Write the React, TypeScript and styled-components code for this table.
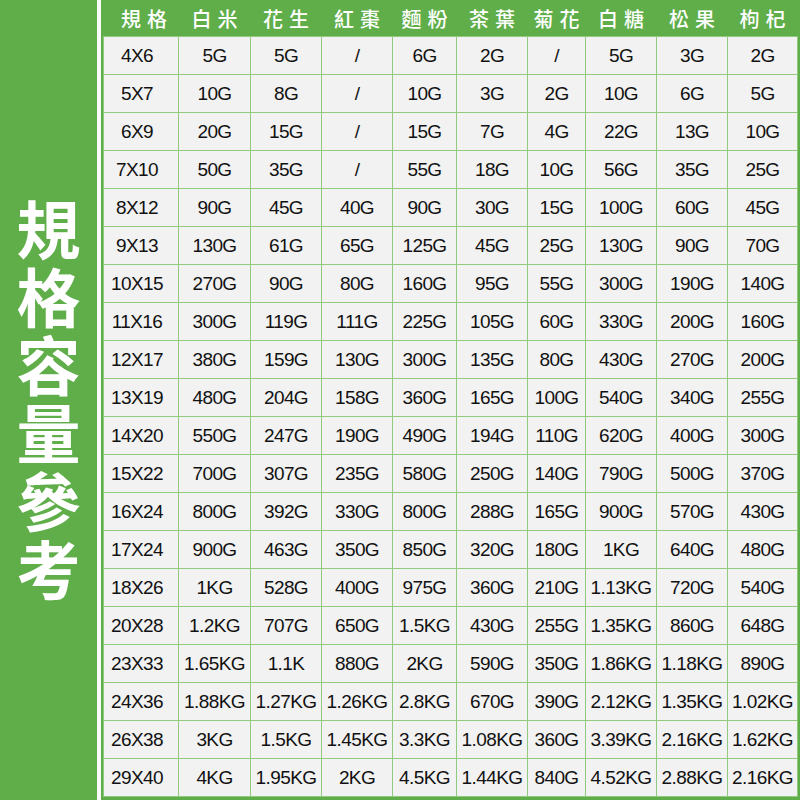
import styled, { createGlobalStyle } from "styled-components";

const GlobalStyle = createGlobalStyle`
  html, body {
    margin: 0;
    padding: 0;
    background: #ffffff;
  }
  body {
    font-family: "Liberation Sans", Arial, sans-serif;
  }
`;

const COLUMNS = "74px 71px 70px 70px 63px 70px 57px 70px 70px 69px";

const headers = ["規格", "白米", "花生", "紅棗", "麵粉", "茶葉", "菊花", "白糖", "松果", "枸杞"];

const rows: string[][] = [
  ["4X6", "5G", "5G", "/", "6G", "2G", "/", "5G", "3G", "2G"],
  ["5X7", "10G", "8G", "/", "10G", "3G", "2G", "10G", "6G", "5G"],
  ["6X9", "20G", "15G", "/", "15G", "7G", "4G", "22G", "13G", "10G"],
  ["7X10", "50G", "35G", "/", "55G", "18G", "10G", "56G", "35G", "25G"],
  ["8X12", "90G", "45G", "40G", "90G", "30G", "15G", "100G", "60G", "45G"],
  ["9X13", "130G", "61G", "65G", "125G", "45G", "25G", "130G", "90G", "70G"],
  ["10X15", "270G", "90G", "80G", "160G", "95G", "55G", "300G", "190G", "140G"],
  ["11X16", "300G", "119G", "111G", "225G", "105G", "60G", "330G", "200G", "160G"],
  ["12X17", "380G", "159G", "130G", "300G", "135G", "80G", "430G", "270G", "200G"],
  ["13X19", "480G", "204G", "158G", "360G", "165G", "100G", "540G", "340G", "255G"],
  ["14X20", "550G", "247G", "190G", "490G", "194G", "110G", "620G", "400G", "300G"],
  ["15X22", "700G", "307G", "235G", "580G", "250G", "140G", "790G", "500G", "370G"],
  ["16X24", "800G", "392G", "330G", "800G", "288G", "165G", "900G", "570G", "430G"],
  ["17X24", "900G", "463G", "350G", "850G", "320G", "180G", "1KG", "640G", "480G"],
  ["18X26", "1KG", "528G", "400G", "975G", "360G", "210G", "1.13KG", "720G", "540G"],
  ["20X28", "1.2KG", "707G", "650G", "1.5KG", "430G", "255G", "1.35KG", "860G", "648G"],
  ["23X33", "1.65KG", "1.1K", "880G", "2KG", "590G", "350G", "1.86KG", "1.18KG", "890G"],
  ["24X36", "1.88KG", "1.27KG", "1.26KG", "2.8KG", "670G", "390G", "2.12KG", "1.35KG", "1.02KG"],
  ["26X38", "3KG", "1.5KG", "1.45KG", "3.3KG", "1.08KG", "360G", "3.39KG", "2.16KG", "1.62KG"],
  ["29X40", "4KG", "1.95KG", "2KG", "4.5KG", "1.44KG", "840G", "4.52KG", "2.88KG", "2.16KG"],
];

const Page = styled.div`
  width: 800px;
  height: 800px;
  display: flex;
  background: #fafafa;
  overflow: hidden;
`;

const SidePanel = styled.div`
  width: 97px;
  height: 100%;
  background: #5fae4a;
  display: flex;
  align-items: center;
  justify-content: center;
  margin-right: 4px;
`;

const SideTitle = styled.div`
  writing-mode: vertical-rl;
  font-family: "Noto Sans CJK TC", "Noto Sans CJK SC", sans-serif;
  font-weight: 700;
  font-size: 64px;
  line-height: 64px;
  letter-spacing: 4px;
  color: #ffffff;
  padding-top: 4px;
`;

const TableArea = styled.div`
  flex: 1;
  background: #5fae4a;
  padding: 0 2px 3px 2px;
  display: flex;
  flex-direction: column;
`;

const HeaderRow = styled.div`
  display: grid;
  grid-template-columns: ${COLUMNS};
  column-gap: 1px;
  padding: 0 1px;
  height: 36px;
`;

const HeaderCell = styled.div<{ $first?: boolean }>`
  display: flex;
  align-items: center;
  justify-content: center;
  font-family: "Noto Sans CJK TC", "Noto Sans CJK SC", sans-serif;
  font-weight: 500;
  font-size: 20px;
  letter-spacing: 6px;
  padding-left: ${(p) => (p.$first ? "12px" : "6px")};
  padding-top: 1px;
  color: #ffffff;
  white-space: nowrap;
`;

const Body = styled.div`
  display: grid;
  grid-template-columns: ${COLUMNS};
  grid-auto-rows: 37px;
  gap: 1px;
  background: #8fca7e;
  border: 1px solid #8fca7e;
`;

const Cell = styled.div<{ $spec?: boolean }>`
  display: flex;
  align-items: center;
  justify-content: center;
  background: #f2f2f2;
  font-family: "Liberation Sans", Arial, sans-serif;
  font-size: 19px;
  letter-spacing: -0.6px;
  color: #111111;
  white-space: nowrap;
  padding-right: ${(p) => (p.$spec ? "8px" : "0")};
`;

export default function App() {
  return (
    <>
      <GlobalStyle />
      <Page>
        <SidePanel>
          <SideTitle>規格容量參考</SideTitle>
        </SidePanel>
        <TableArea>
          <HeaderRow>
            {headers.map((h, i) => (
              <HeaderCell key={h} $first={i === 0}>
                {h}
              </HeaderCell>
            ))}
          </HeaderRow>
          <Body>
            {rows.map((row) =>
              row.map((value, i) => (
                <Cell key={row[0] + "-" + i} $spec={i === 0}>
                  {value}
                </Cell>
              ))
            )}
          </Body>
        </TableArea>
      </Page>
    </>
  );
}
